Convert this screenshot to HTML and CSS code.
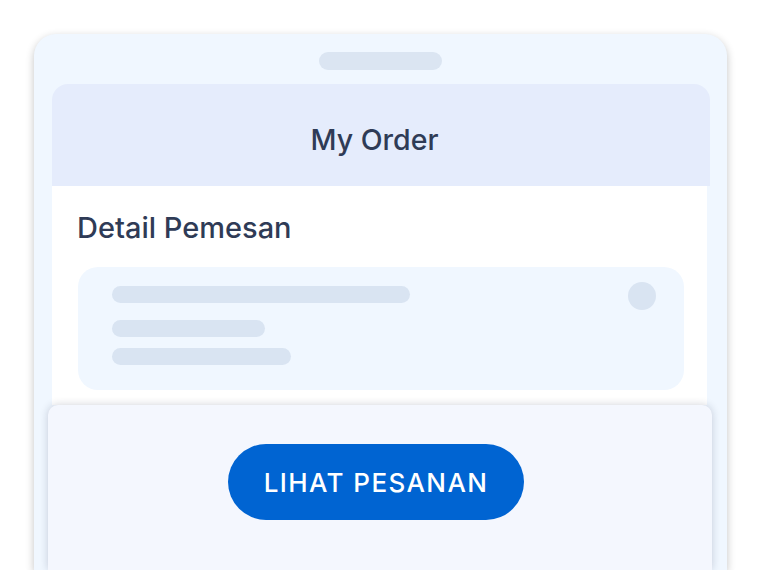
FILE: index.html
```html
<!DOCTYPE html>
<html>
<head>
<meta charset="utf-8">
<link rel="stylesheet" href="styles.css">
</head>
<body>
<div class="phone">
  <div class="notch"></div>
  <div class="screen">
    <div class="header"><h1 class="title">My Order</h1></div>
    <div class="content">
      <h2 class="section-title">Detail Pemesan</h2>
      <div class="card">
        <div class="lines">
          <div class="bar bar-1"></div>
          <div class="bar bar-2"></div>
          <div class="bar bar-3"></div>
        </div>
        <div class="dot"></div>
      </div>
    </div>
    <div class="panel">
      <button class="btn">LIHAT PESANAN</button>
    </div>
  </div>
</div>
</body>
</html>
```

FILE: styles.css
```css
html, body {
  margin: 0;
  padding: 0;
  background: #ffffff;
  width: 760px;
  height: 570px;
  overflow: hidden;
  font-family: Inter, "Noto Sans", sans-serif;
}
.phone {
  margin: 34px 0 0 34px;
  width: 693px;
  height: 536px;
  box-sizing: border-box;
  background: #f0f7ff;
  border-radius: 22px 22px 0 0;
  box-shadow: 0 3px 8px rgba(0, 0, 0, 0.24);
  padding: 18px 17px 0 18px;
  display: flex;
  flex-direction: column;
}
.notch {
  width: 123px;
  height: 18px;
  border-radius: 9px;
  background: #dbe5f2;
  margin: 0 auto 14px;
  position: relative;
  left: -1px;
  flex: none;
}
.screen {
  flex: 1;
  display: flex;
  flex-direction: column;
}
.header {
  height: 102px;
  background: #e5ecfc;
  border-radius: 16px 16px 0 0;
  display: flex;
  align-items: center;
  justify-content: center;
  padding-right: 13px;
  flex: none;
}
.title {
  margin: 10px 0 0;
  font-size: 28.5px;
  line-height: 34px;
  font-weight: 550;
  color: #2f3b56;
}
.content {
  background: #ffffff;
  margin-right: 3px;
  padding: 25px 23px 14px 25px;
  height: 180px;
  flex: none;
}
.section-title {
  margin: 0 0 22px;
  font-size: 29px;
  font-weight: 550;
  color: #2f3b56;
  line-height: 34px;
}
.card {
  margin-left: 1px;
  height: 123px;
  background: #f0f7ff;
  border-radius: 20px;
  display: flex;
  justify-content: space-between;
  padding: 19px 28px 0 34px;
  box-sizing: border-box;
}
.lines {
  display: flex;
  flex-direction: column;
}
.bar {
  height: 17px;
  border-radius: 9px;
  background: #d9e4f2;
}
.bar-1 { width: 298px; }
.bar-2 { width: 153px; margin-top: 17px; }
.bar-3 { width: 179px; margin-top: 11px; }
.dot {
  width: 28px;
  height: 28px;
  border-radius: 50%;
  background: #d9e4f2;
  margin-top: -4px;
}
.panel {
  flex: 1;
  margin: 0 -2px 0 -4px;
  background: #f4f7fe;
  border-radius: 10px 10px 0 0;
  box-shadow: 0 0 9px rgba(20, 30, 60, 0.2);
  display: flex;
  justify-content: center;
  align-items: flex-start;
  padding-top: 39px;
  box-sizing: border-box;
}
.btn {
  width: 296px;
  height: 76px;
  border: none;
  border-radius: 38px;
  background: #0064d2;
  color: #ffffff;
  font-family: Inter, "Noto Sans", sans-serif;
  font-size: 26px;
  font-weight: 550;
  letter-spacing: 1.4px;
  margin-left: -8px;
}
```
